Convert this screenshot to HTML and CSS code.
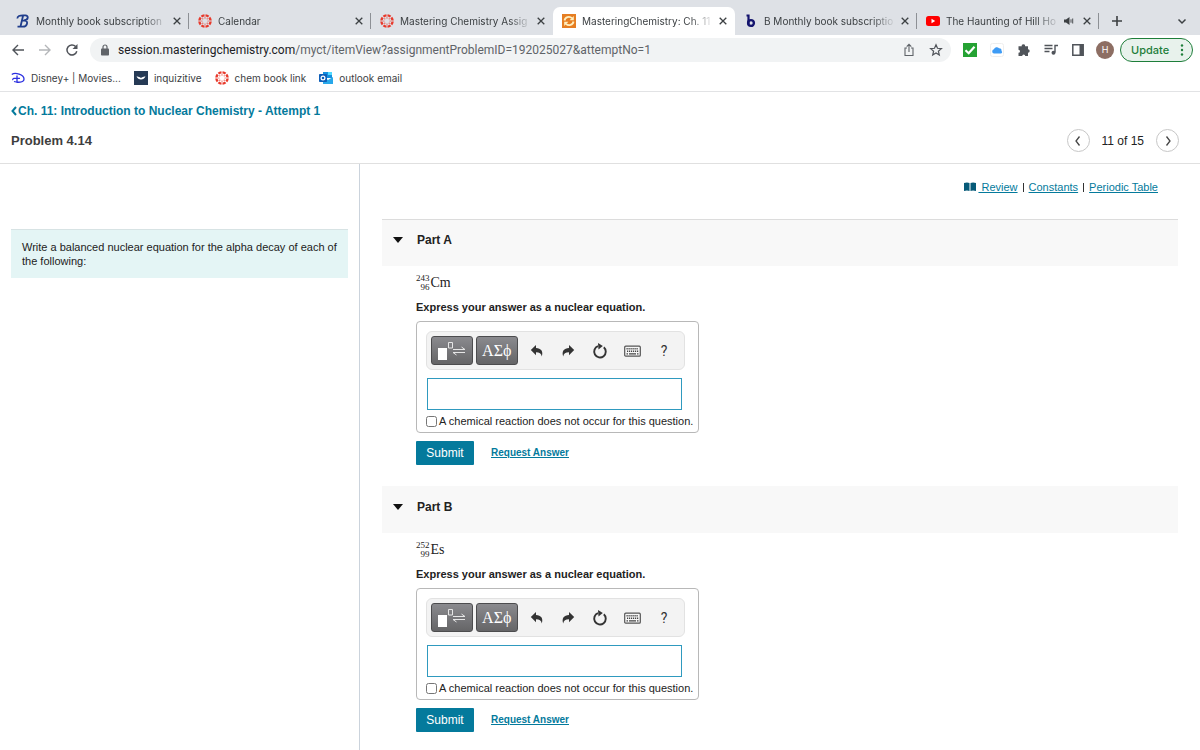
FILE: index.html
```html
<!DOCTYPE html>
<html lang="en">
<head>
<meta charset="utf-8">
<title>MasteringChemistry: Ch. 11</title>
<link rel="stylesheet" href="styles.css">
</head>
<body>
<svg class="sprite" aria-hidden="true">
  <symbol id="close" viewBox="0 0 12 12"><path d="M2.700 2.700l6.600 6.600M9.300 2.700l-6.600 6.600" fill="none" stroke="#3c4043" stroke-width="1.300"/></symbol>
  <symbol id="canvas" viewBox="0 0 14 14">
    <circle cx="7" cy="7" r="5.600" fill="none" stroke="#e8392b" stroke-width="2.400" pathLength="80" stroke-dasharray="7.600 2.400" stroke-dashoffset="-1.200"/>
    <g fill="#e8392b"><circle cx="7" cy="3.900" r=".6"/><circle cx="7" cy="10.100" r=".6"/><circle cx="3.900" cy="7" r=".6"/><circle cx="10.100" cy="7" r=".6"/><circle cx="4.800" cy="4.800" r=".6"/><circle cx="9.200" cy="9.200" r=".6"/><circle cx="4.800" cy="9.200" r=".6"/><circle cx="9.200" cy="4.800" r=".6"/></g>
  </symbol>
  <symbol id="template" viewBox="0 0 30 20">
    <path d="M1 7h9v12H1z" fill="#fff"/><path d="M11.500 1.500h4v5.500h-4z" fill="none" stroke="#e6e6e6"/>
    <path d="M16 8.500h12l-3.500-2.500M28 11.500H16l3.500 2.500" fill="none" stroke="#e6e6e6" stroke-width="1"/>
  </symbol>
  <symbol id="undo" viewBox="0 0 14 14"><path d="M6 1v3c5 .2 7.500 3.200 5.800 8.500C11.300 9.500 9.500 8.200 6 8.200v3L.8 6z" fill="#333"/></symbol>
  <symbol id="reset" viewBox="0 0 16 16"><path d="M6 3.200A5.800 5.800 0 1 0 11.800 4.300" fill="none" stroke="#333" stroke-width="1.900"/><path d="M6 0l4.800 3-4.300 3.500z" fill="#333"/></symbol>
  <symbol id="keyboard" viewBox="0 0 17 12"><rect x=".7" y="1.200" width="15.600" height="10" rx="1" fill="#f7f7f7" stroke="#555" stroke-width="1.200"/><path d="M2.500 3.700h12M3 6.200h12" stroke="#444" stroke-width="1.400" stroke-dasharray="1.200 .8"/><path d="M2.500 8.800h1.500M5 8.800h7M13 8.800h1.500" stroke="#444" stroke-width="1.300"/></symbol>
</svg>

<header class="browser">
  <nav class="tabs" aria-label="Tabs">
    <div class="tab">
      <svg class="icon14" viewBox="0 0 14 14"><path d="M4.500 12.500L7 2M1.500 4.500C1 2 4 1.300 7 1.300h2.500c3 0 3.500 4.700-1.500 5.200M6 6.600h3c3.500.2 2.500 6-2 6H1.500" fill="none" stroke="#1f3d8c" stroke-width="1.800"/></svg>
      <a class="tab-title" href="#">Monthly book subscription</a>
      <button class="plain" aria-label="Close tab"><svg class="icon12"><use href="#close"/></svg></button>
    </div>
    <div class="tab">
      <svg class="icon14"><use href="#canvas"/></svg>
      <a class="tab-title" href="#">Calendar</a>
      <button class="plain" aria-label="Close tab"><svg class="icon12"><use href="#close"/></svg></button>
    </div>
    <div class="tab before-active">
      <svg class="icon14"><use href="#canvas"/></svg>
      <a class="tab-title" href="#">Mastering Chemistry Assig</a>
      <button class="plain" aria-label="Close tab"><svg class="icon12"><use href="#close"/></svg></button>
    </div>
    <div class="tab active">
      <svg class="icon14" viewBox="0 0 14 14"><rect width="14" height="14" fill="#e67e22"/><path d="M2.500 6.500C3 3 7.500 1.800 10 4.200M11.500 7.500C11 11 6.500 12.200 4 9.800" fill="none" stroke="#fff0c0" stroke-width="1.800"/><path d="M11.800 2v4.200H7.600zM2.200 12V7.800h4.200z" fill="#fff0c0"/></svg>
      <a class="tab-title" href="#">MasteringChemistry: Ch. 11</a>
      <button class="plain" aria-label="Close tab"><svg class="icon12"><use href="#close"/></svg></button>
    </div>
    <div class="tab">
      <svg class="icon14" viewBox="0 0 14 14"><path d="M2.500 1.500H4.500v9" fill="none" stroke="#14146e" stroke-width="2.200"/><circle cx="7" cy="9" r="2.900" fill="none" stroke="#14146e" stroke-width="2.400"/></svg>
      <a class="tab-title" href="#">B Monthly book subscriptio</a>
      <button class="plain" aria-label="Close tab"><svg class="icon12"><use href="#close"/></svg></button>
    </div>
    <div class="tab">
      <svg class="icon14" viewBox="0 0 14 14"><rect y="2" width="14" height="10" rx="2.500" fill="#f00"/><path d="M5.500 4.800v4.400L9.200 7z" fill="#fff"/></svg>
      <a class="tab-title" href="#">The Haunting of Hill Ho</a>
      <div class="tab-end">
        <svg class="icon12" viewBox="0 0 12 12"><path d="M1 4.500h2L6.500 2v8L3 7.500H1z" fill="#3c4043"/><path d="M8 4.300v3.400M9.700 3.500v5" stroke="#3c4043" stroke-width=".9"/></svg>
        <button class="plain" aria-label="Close tab"><svg class="icon12"><use href="#close"/></svg></button>
      </div>
    </div>
    <button class="plain new-tab" aria-label="New tab"><svg class="icon12" viewBox="0 0 12 12"><path d="M6 1v10M1 6h10" stroke="#3c4043" stroke-width="1.600"/></svg></button>
    <button class="plain tab-menu" aria-label="Search tabs"><svg class="icon12" viewBox="0 0 12 12"><path d="M2.500 4.500L6 8l3.500-3.500" fill="none" stroke="#3c4043" stroke-width="1.500"/></svg></button>
  </nav>

  <div class="toolbar">
    <div class="nav-buttons">
      <button class="plain" aria-label="Back"><svg class="icon14" viewBox="0 0 14 14"><path d="M13 7H2M7 2L2 7l5 5" fill="none" stroke="#50545a" stroke-width="1.400"/></svg></button>
      <button class="plain" aria-label="Forward"><svg class="icon14" viewBox="0 0 14 14"><path d="M1 7h11M7 2l5 5-5 5" fill="none" stroke="#b4b6b9" stroke-width="1.400"/></svg></button>
      <button class="plain" aria-label="Reload"><svg class="icon14" viewBox="0 0 14 14"><path d="M11.800 8.300A5 5 0 1 1 10.600 3.500" fill="none" stroke="#50545a" stroke-width="1.500"/><path d="M12.500 1v5H7.500z" fill="#50545a"/></svg></button>
    </div>
    <div class="address">
      <svg class="icon12" viewBox="0 0 12 12"><rect x="2" y="4.500" width="8" height="7" rx=".8" fill="#5f6368"/><path d="M4 5V3a2 2 0 0 1 4 0v2" fill="none" stroke="#5f6368" stroke-width="1.200"/></svg>
      <span class="url"><span class="host">session.masteringchemistry.com</span>/myct/itemView?assignmentProblemID=192025027&amp;attemptNo=1</span>
      <button class="plain" aria-label="Share"><svg class="icon14" viewBox="0 0 14 14"><path d="M5 5H3v7.500h8V5H9M7 9V1.500M4.700 3.700L7 1.400l2.300 2.300" fill="none" stroke="#5f6368" stroke-width="1.100"/></svg></button>
      <button class="plain" aria-label="Bookmark"><svg class="icon14" viewBox="0 0 14 14"><path d="M7 1.800l1.500 3.500 3.900.3-3 2.600.9 3.800L7 10l-3.300 2 .9-3.800-3-2.600 3.900-.3z" fill="none" stroke="#50545a" stroke-width="1.200"/></svg></button>
    </div>
    <div class="extensions">
      <button class="plain" aria-label="Checker"><svg class="icon14" viewBox="0 0 14 14"><rect width="14" height="14" fill="#25a233"/><path d="M2.500 7.300l3.200 3L11.500 3.800" fill="none" stroke="#fff" stroke-width="2.200"/></svg></button>
      <button class="plain" aria-label="iCloud"><svg class="icon14" viewBox="0 0 14 14"><rect x=".5" y=".5" width="13" height="13" rx="2" fill="#fff" stroke="#eee"/><path d="M4 10.500a2.200 2.200 0 0 1-.1-4.300A3 3 0 0 1 9 5.200a2.500 2.500 0 0 1 2.500 2.900 1.300 1.300 0 0 1-.8 2.400z" fill="#3d9bf5"/></svg></button>
      <button class="plain" aria-label="Extensions"><svg class="icon14" viewBox="0 0 14 14"><path d="M1.500 3.300H4.800a1.700 1.700 0 1 1 3.300 0H11V6.300a1.700 1.700 0 1 1 0 3.400V13H8.200a1.500 1.500 0 1 0-3 0H1.500V9.800a1.500 1.500 0 1 0 0-3z" fill="#50545a"/></svg></button>
      <button class="plain" aria-label="Media"><svg class="icon14" viewBox="0 0 14 14"><path d="M.5 2.500h8M.5 5.500h8M.5 8.500h5M11 9.500v-7h3" fill="none" stroke="#50545a" stroke-width="1.400"/><circle cx="9.500" cy="9.800" r="2" fill="#50545a"/></svg></button>
      <button class="plain" aria-label="Side panel"><svg class="icon14" viewBox="0 0 14 14"><path d="M1.800 1.800h10.400v10.400H1.800z" fill="#fff" stroke="#50545a" stroke-width="1.500"/><path d="M8.500 2H12v10H8.500z" fill="#50545a"/></svg></button>
      <button class="avatar" aria-label="Profile">H</button>
    </div>
    <button class="update">Update <svg class="icon12" viewBox="0 0 12 12"><g fill="#1e7e3a"><circle cx="6" cy="1.500" r="1.200"/><circle cx="6" cy="6" r="1.200"/><circle cx="6" cy="10.500" r="1.200"/></g></svg></button>
  </div>

  <nav class="bookmarks" aria-label="Bookmarks">
    <a href="#"><svg class="icon14" viewBox="0 0 14 14"><path d="M.8 3.500C4 1 13 3.500 13 8c0 4-7 3.500-10 2.500M2 9c-1-1 1-2.500 7-1.600M6 4.500v7.500" fill="none" stroke="#2b2fe0" stroke-width="1.300"/></svg>Disney+ | Movies...</a>
    <a href="#"><svg class="icon14" viewBox="0 0 14 14"><rect width="14" height="14" fill="#263a55"/><path d="M2.500 5.500c2 0 3 .5 4.500 1.500 1.500-1 2.500-1.500 4.500-1.500C10.500 7.500 9 8.500 7 8.500S3.500 7.500 2.500 5.500z" fill="#fff"/></svg>inquizitive</a>
    <a href="#"><svg class="icon14"><use href="#canvas"/></svg>chem book link</a>
    <a href="#"><svg class="icon14" viewBox="0 0 14 14"><path d="M4 1h9v6H4z" fill="#1490df"/><path d="M4 6l5 3 5-3v7H4z" fill="#28a8ea"/><path d="M9 1h4v3H9z" fill="#50d9ff"/><rect y="3" width="8" height="8" rx=".8" fill="#0f5fb8"/><circle cx="4" cy="7" r="1.900" fill="none" stroke="#fff" stroke-width="1.200"/></svg>outlook email</a>
  </nav>
</header>

<main>
  <section class="heading">
    <a class="back" href="#"><svg class="chev" viewBox="0 0 6 10"><path d="M5 1L1.500 5 5 9" fill="none" stroke="#047a9c" stroke-width="2"/></svg>Ch. 11: Introduction to Nuclear Chemistry - Attempt 1</a>
    <div class="problem-row">
      <h1>Problem 4.14</h1>
      <div class="pager">
        <button class="round" aria-label="Previous"><svg class="icon12" viewBox="0 0 12 12"><path d="M7.500 1.500L4 6l3.500 4.500" fill="none" stroke="#444" stroke-width="1.300"/></svg></button>
        <span>11 of 15</span>
        <button class="round" aria-label="Next"><svg class="icon12" viewBox="0 0 12 12"><path d="M4.500 1.500L8 6l-3.500 4.500" fill="none" stroke="#444" stroke-width="1.300"/></svg></button>
      </div>
    </div>
  </section>

  <div class="columns">
    <aside class="prompt"><p>Write a balanced nuclear equation for the alpha decay of each of the following:</p></aside>
    <div class="work">
      <nav class="resources" aria-label="Resources">
        <svg class="book" viewBox="0 0 12 10"><path d="M0 1c2-.8 4-.8 5.500 0v8C4 8.200 2 8.200 0 9zM6.500 1C8 .2 10 .2 12 1v8c-2-.8-4-.8-5.500 0z" fill="#065a78"/></svg>
        <a href="#">&nbsp;Review</a><i class="bar"></i><a href="#">Constants</a><i class="bar"></i><a href="#">Periodic Table</a>
      </nav>

      <section class="part">
        <header class="part-head first">
          <button class="plain" aria-label="Collapse Part A"><svg class="tri" viewBox="0 0 10 6"><path d="M0 0h10L5 6z" fill="#111"/></svg></button>
          <h2>Part A</h2>
        </header>
        <div class="part-body">
          <p class="nuclide"><span class="scripts"><span>243</span><span>96</span></span>Cm</p>
          <p class="instruction">Express your answer as a nuclear equation.</p>
          <div class="answer">
            <div class="palette">
              <button class="dark" aria-label="Templates"><svg class="template"><use href="#template"/></svg></button>
              <button class="dark">ΑΣϕ</button>
              <button class="tool" aria-label="Undo"><svg class="icon14"><use href="#undo"/></svg></button>
              <button class="tool" aria-label="Redo"><svg class="icon14 flip"><use href="#undo"/></svg></button>
              <button class="tool" aria-label="Reset"><svg class="icon16"><use href="#reset"/></svg></button>
              <button class="tool" aria-label="Keyboard"><svg class="keys"><use href="#keyboard"/></svg></button>
              <button class="tool">?</button>
            </div>
            <input class="equation" type="text" aria-label="Part A answer">
            <label class="none"><input type="checkbox">A chemical reaction does not occur for this question.</label>
          </div>
          <div class="actions"><button class="submit">Submit</button><a href="#">Request Answer</a></div>
        </div>
      </section>

      <section class="part">
        <header class="part-head">
          <button class="plain" aria-label="Collapse Part B"><svg class="tri" viewBox="0 0 10 6"><path d="M0 0h10L5 6z" fill="#111"/></svg></button>
          <h2>Part B</h2>
        </header>
        <div class="part-body">
          <p class="nuclide"><span class="scripts"><span>252</span><span>99</span></span>Es</p>
          <p class="instruction">Express your answer as a nuclear equation.</p>
          <div class="answer">
            <div class="palette">
              <button class="dark" aria-label="Templates"><svg class="template"><use href="#template"/></svg></button>
              <button class="dark">ΑΣϕ</button>
              <button class="tool" aria-label="Undo"><svg class="icon14"><use href="#undo"/></svg></button>
              <button class="tool" aria-label="Redo"><svg class="icon14 flip"><use href="#undo"/></svg></button>
              <button class="tool" aria-label="Reset"><svg class="icon16"><use href="#reset"/></svg></button>
              <button class="tool" aria-label="Keyboard"><svg class="keys"><use href="#keyboard"/></svg></button>
              <button class="tool">?</button>
            </div>
            <input class="equation" type="text" aria-label="Part B answer">
            <label class="none"><input type="checkbox">A chemical reaction does not occur for this question.</label>
          </div>
          <div class="actions"><button class="submit">Submit</button><a href="#">Request Answer</a></div>
        </div>
      </section>
    </div>
  </div>
</main>
</body>
</html>
```
FILE: styles.css
```css
* { box-sizing: border-box; }
body {
  margin: 0;
  min-height: 100vh;
  display: flex;
  flex-direction: column;
  background: #fff;
  color: #222;
  font: 11px/14px "Liberation Sans", Arial, sans-serif;
}
h1, h2, p { margin: 0; }
button { font: inherit; color: inherit; margin: 0; padding: 0; }
a { color: #047a9c; }
svg { display: block; flex: none; }
.sprite { position: absolute; width: 0; height: 0; }
.plain { border: 0; background: none; flex: none; }
.icon12 { width: 12px; height: 12px; }
.icon14 { width: 14px; height: 14px; }
.icon16 { width: 16px; height: 16px; }

/* Browser frame */
.browser { font-family: Inter, Roboto, sans-serif; color: #3c4043; border-bottom: 1px solid #e2e3e5; }
.tabs { display: flex; align-items: flex-end; height: 35px; padding: 0 12px 0 7px; background: #dee1e6; }
.tab {
  flex: 0 1 182px;
  min-width: 0;
  height: 28px;
  display: flex;
  align-items: center;
  padding: 0 6px 0 9px;
  position: relative;
}
.tab::after { content: ""; position: absolute; right: 0; top: 6px; width: 1px; height: 16px; background: #8d9095; }
.tab.before-active::after, .tab.active::after { display: none; }
.tab.active { background: #fff; border-radius: 7px 7px 0 0; }
.tab-title {
  flex: 1;
  min-width: 0;
  margin: 0 3px 0 6px;
  overflow: hidden;
  white-space: nowrap;
  color: #3c4043;
  text-decoration: none;
  font-size: 10px;
  mask-image: linear-gradient(to right, #000 calc(100% - 24px), transparent);
}
.tab-end { display: flex; gap: 6px; }
.new-tab { margin: 0 0 8px 12px; }
.tab-menu { margin: 0 0 8px auto; }
.toolbar { display: flex; align-items: center; height: 30px; padding: 0 7px 0 11px; }
.nav-buttons { display: flex; gap: 13px; margin-right: 11px; }
.address {
  flex: 1;
  min-width: 0;
  display: flex;
  align-items: center;
  gap: 13px;
  height: 24px;
  padding: 0 8px 0 9px;
  border-radius: 12px;
  background: #f1f3f4;
}
.url { flex: 1; min-width: 0; margin-left: -6px; overflow: hidden; white-space: nowrap; font: 12px/18px Roboto, sans-serif; color: #5f6368; }
.host { color: #202124; }
.extensions { display: flex; align-items: center; gap: 13px; margin: 0 6px 0 12px; }
.avatar { width: 18px; height: 18px; margin-left: -2px; border: 0; border-radius: 50%; background: #8d6e63; color: #fff; font-size: 9px; }
.update { display: flex; align-items: center; justify-content: space-between; width: 73px; height: 24px; padding: 0 4px 0 10px; border: 1px solid #1e7e3a; border-radius: 12px; background: #e8f2ec; color: #1e7e3a; font-size: 11px; font-weight: 500; }
.bookmarks { display: flex; gap: 13px; height: 26px; padding: 0 11px; align-items: center; font-size: 10px; }
.bookmarks a { display: flex; align-items: center; gap: 6px; color: #3c4043; text-decoration: none; white-space: nowrap; }

/* Assignment heading */
main { flex: 1; display: flex; flex-direction: column; }
.heading { padding: 12px 21px 11px 11px; border-bottom: 1px solid #e0e0e0; }
.back { display: flex; align-items: center; gap: 1px; font-size: 12px; font-weight: bold; text-decoration: none; }
.chev { width: 6px; height: 10px; }
.problem-row { display: flex; align-items: center; justify-content: space-between; margin-top: 11px; }
h1 { font-size: 13px; line-height: 18px; color: #3e3e3e; }
.pager { display: flex; align-items: center; gap: 12px; font-size: 12px; }
.round { display: flex; align-items: center; justify-content: center; width: 23px; height: 23px; border: 1px solid #c7c7c7; border-radius: 50%; background: #fff; }

/* Two columns */
.columns { flex: 1; display: grid; grid-template-columns: 30fr 70fr; }
.prompt { padding: 65px 11px 0; border-right: 1px solid #cbd3dc; }
.prompt p { padding: 10px 11px; border-top: 1px solid #d7e3e4; background: #e4f5f5; line-height: 14px; }
.work { min-width: 0; padding: 16px 22px; }
.resources { display: flex; align-items: center; justify-content: flex-end; padding-right: 20px; }
.book { width: 12px; height: 10px; margin-right: 2px; }
.bar { width: 1px; height: 9px; margin: 0 5px; background: #333; }
.part-head { display: flex; align-items: center; gap: 14px; height: 47px; padding: 0 11px 7px; border-top: 1px solid transparent; background: #f8f8f8; }
.part-head.first { margin-top: 25px; border-top-color: #dcdcdc; }
.tri { width: 10px; height: 6px; }
h2 { font-size: 12px; line-height: 14px; }
.part-body { padding: 8px 0 21px 34px; }
.nuclide { display: flex; align-items: center; gap: 1px; font: 14px/18px "Liberation Serif", serif; }
.scripts { display: flex; flex-direction: column; align-items: flex-end; font-size: 9px; line-height: 9px; }
.instruction { margin: 8px 0 7px; font-weight: bold; }
.answer { width: fit-content; padding: 9px 5px 4px 9px; border: 1px solid #b8b8b8; border-radius: 4px; }
.palette { display: flex; align-items: center; width: 259px; height: 39px; padding: 0 4px; border: 1px solid #e2e2e2; border-radius: 6px; background: #f3f3f3; }
.dark { display: flex; align-items: center; justify-content: center; width: 42px; height: 29px; margin-right: 3px; border: 1px solid #4c4c4e; border-radius: 3px; background: linear-gradient(#8a8a8e, #656567); color: #fff; font: 16px/20px "Liberation Serif", serif; }
.template { width: 30px; height: 20px; }
.tool { display: flex; align-items: center; justify-content: center; width: 32px; height: 28px; border: 0; background: none; color: #333; font: 14px/16px Roboto, sans-serif; }
.flip { transform: scaleX(-1); }
.keys { width: 17px; height: 12px; }
.equation { display: block; width: 255px; height: 32px; margin: 8px 0 4px 1px; padding: 0 8px; border: 1px solid #2f9abf; background: #fff; font-size: 14px; }
.none { display: flex; align-items: center; gap: 2px; }
.none input { width: 11px; height: 11px; margin: 0; }
.actions { display: flex; align-items: center; gap: 17px; margin-top: 8px; font-size: 10px; font-weight: bold; }
.submit { width: 58px; height: 24px; border: 0; border-radius: 1px; background: #047a9c; color: #fff; font-size: 12px; font-weight: normal; }
```
